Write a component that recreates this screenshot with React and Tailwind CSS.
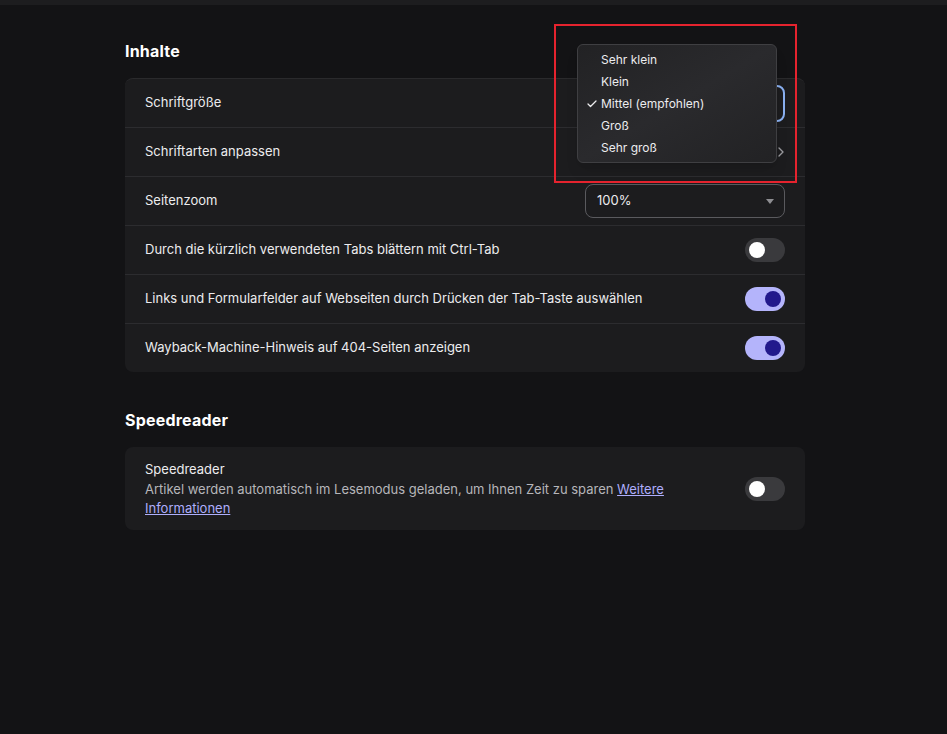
import { ChevronRight, Check } from "lucide-react";

function Toggle({ on }) {
  return (
    <div
      className={
        "w-10 h-6 rounded-full flex items-center px-1 " +
        (on ? "bg-[#b4b4fb] justify-end" : "bg-[#3a3a3d] justify-start")
      }
    >
      <div className={"w-4 h-4 rounded-full " + (on ? "bg-[#22198c]" : "bg-white")} />
    </div>
  );
}

function Row({ label, children, last }) {
  return (
    <div
      className={
        "flex items-center justify-between h-[48px] pl-5 pr-5 box-content " +
        (last ? "" : "border-b border-[#2c2c2f]")
      }
    >
      <span className="text-[13px] text-[#ececee]">{label}</span>
      {children}
    </div>
  );
}

export default function App() {
  const sizes = ["Sehr klein", "Klein", "Mittel (empfohlen)", "Groß", "Sehr groß"];

  return (
    <div
      className="min-h-screen bg-[#131315] relative"
      style={{ fontFamily: "Inter, 'Noto Sans', sans-serif" }}
    >
      <div className="h-[5px] bg-[#1d1d1f]" />

      <div className="ml-[125px] w-[680px] pt-[36px]">
        {/* Inhalte */}
        <h2 className="text-[16px] font-bold text-white leading-5 mb-[17px] tracking-[0.2px]">Inhalte</h2>
        <div className="bg-[#1c1c1e] rounded-lg border-t border-[#2a2a2c]">
          <Row label="Schriftgröße">
            <div className="w-[200px] h-[37px] rounded-lg border-2 border-[#8ab0f0]" />
          </Row>
          <Row label="Schriftarten anpassen">
            <ChevronRight className="w-4 h-4 text-[#9a9a9e] -mr-1" />
          </Row>
          <Row label="Seitenzoom">
            <div className="w-[200px] h-[34px] rounded-lg border border-[#5a5a5e] flex items-center justify-between pl-[11px] pr-[10px] text-[13px] text-[#ececee]">
              <span>100%</span>
              <svg width="8" height="5" viewBox="0 0 8 5">
                <path d="M0 0h8L4 5z" fill="#8e8e92" />
              </svg>
            </div>
          </Row>
          <Row label="Durch die kürzlich verwendeten Tabs blättern mit Ctrl-Tab">
            <Toggle />
          </Row>
          <Row label="Links und Formularfelder auf Webseiten durch Drücken der Tab-Taste auswählen">
            <Toggle on />
          </Row>
          <Row label="Wayback-Machine-Hinweis auf 404-Seiten anzeigen" last>
            <Toggle on />
          </Row>
        </div>

        {/* Speedreader */}
        <h2 className="text-[16px] font-bold text-white leading-5 mt-[38px] mb-[17px] tracking-[0.2px]">Speedreader</h2>
        <div className="bg-[#1c1c1e] rounded-lg flex items-center justify-between pl-5 pr-5 py-[12px]">
          <div className="w-[520px]">
            <div className="text-[13px] text-[#ececee] leading-5">Speedreader</div>
            <p className="text-[13px] text-[#b6b6ba] leading-[19px] mt-[1px]">
              Artikel werden automatisch im Lesemodus geladen, um Ihnen Zeit zu sparen{" "}
              <a className="text-[#aeaefc] underline">Weitere Informationen</a>
            </p>
          </div>
          <Toggle />
        </div>
      </div>

      {/* open dropdown menu */}
      <div className="absolute left-[577px] top-[44px] w-[200px] h-[119px] rounded-md border border-[#3f3f42] bg-gradient-to-br from-[#222224] via-[#2a2a2d] to-[#222224] shadow-lg py-[4px]">
        {sizes.map((s, i) => (
          <div key={s} className="h-[22px] flex items-center text-[12px] text-[#ececee]">
            <span className="w-[23px] flex justify-end pr-[3px]">
              {i === 2 && <Check className="w-3 h-3 text-[#ececee]" strokeWidth={2.5} />}
            </span>
            <span>{s}</span>
          </div>
        ))}
      </div>

      {/* annotation box */}
      <div className="absolute left-[554px] top-[24px] w-[243px] h-[159px] border-2 border-[#e5232e] pointer-events-none" />
    </div>
  );
}
